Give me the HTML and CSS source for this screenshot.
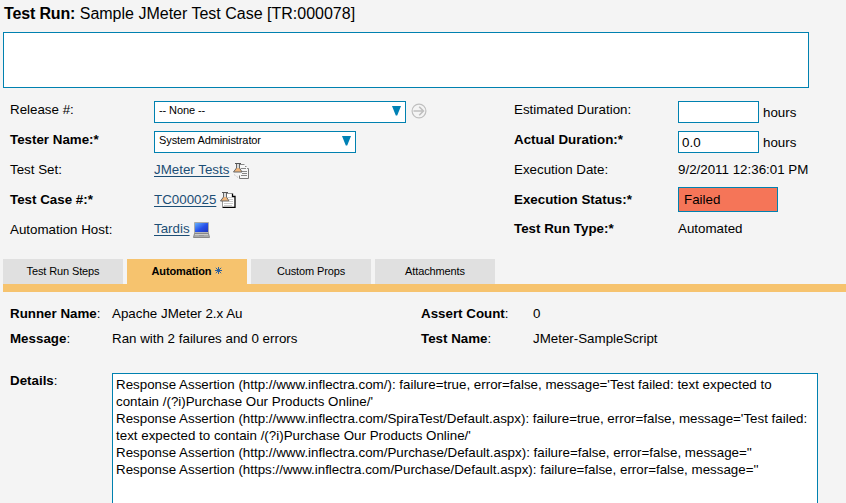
FILE: index.html
```html
<!DOCTYPE html>
<html lang="en">
<head>
<meta charset="utf-8">
<title>Test Run</title>
<link rel="stylesheet" href="styles.css">
</head>
<body>
<h1 class="title"><b>Test Run:</b> <span class="name">Sample JMeter Test Case [TR:000078]</span></h1>
<div class="description"></div>
<section class="fields">
  <div class="label">Release #:</div>
  <div class="value"><div class="select wide"><span>-- None --</span><svg class="arrow" width="9" height="10" viewBox="0 0 9 10"><path d="M0 0h9L5.2 9.5H3.8z" fill="#0081b5"/></svg></div><svg class="go" width="16" height="16" viewBox="0 0 16 16" fill="none" stroke="#bfbfbf"><circle cx="8" cy="8" r="6.9" stroke-width="1.2"/><path d="M2.5 8H12M8.2 3.8L12.4 8l-4.2 4.2" stroke-width="1.6"/></svg></div>
  <div class="label">Estimated Duration:</div>
  <div class="value"><div class="input"></div><span class="unit">hours</span></div>

  <div class="label req">Tester Name:*</div>
  <div class="value"><div class="select"><span>System Administrator</span><svg class="arrow" width="9" height="10" viewBox="0 0 9 10"><path d="M0 0h9L5.2 9.5H3.8z" fill="#0081b5"/></svg></div></div>
  <div class="label req">Actual Duration:*</div>
  <div class="value"><div class="input">0.0</div><span class="unit">hours</span></div>

  <div class="label">Test Set:</div>
  <div class="value"><a class="text">JMeter Tests</a><svg class="icon" width="16" height="16" viewBox="0 0 16 16"><path d="M6.5.5h5v3h2v2h2v10h-9v-2h-1V8" fill="#f7f7f7"/><path d="M7 1.5h4.5M12 3.5h1.5M14 5.5h1.5" stroke="#888"/><path d="M15.5 5.5v10H6.5v-3" fill="none" stroke="#777"/><path d="M8 5.5h5M9 8.5h5M9 10.5h5M8 12.5h6" stroke="#888"/><path d="M3.5 1h3v4l2.5 4H.5l3-4z" fill="#efb57b" stroke="#666"/><path d="M2 .5h6" stroke="#555"/><path d="M4 1h2v4H4z" fill="#ddd"/><path d="M1 11.5l4 3" stroke="#bbb" stroke-dasharray="1 1"/></svg></div>
  <div class="label">Execution Date:</div>
  <div class="value"><span class="text date">9/2/2011 12:36:01 PM</span></div>

  <div class="label req">Test Case #:*</div>
  <div class="value"><a class="text">TC000025</a><svg class="icon case" width="16" height="16" viewBox="0 0 16 16"><path d="M2.5 9V15.5h13v-11l-3-3H6" fill="#fff"/><path d="M6 1.5h6" stroke="#999"/><path d="M12.5 1.5v3h2.5v10.8H2.5" fill="none" stroke="#000" stroke-width="1.3"/><path d="M2.5 9v6" stroke="#999"/><path d="M8 5.5h4M9 7.5h4M9 9.5h4M4 11.5h9M4 13.5h8" stroke="#ccc"/><path d="M3.5 1h3v4l2.5 4H.5l3-4z" fill="#efb57b" stroke="#666"/><path d="M2 .5h6" stroke="#555"/><path d="M4 1h2v4H4z" fill="#ddd"/></svg></div>
  <div class="label req">Execution Status:*</div>
  <div class="value"><div class="status">Failed</div></div>

  <div class="label">Automation Host:</div>
  <div class="value last"><a class="text">Tardis</a><svg class="icon host" width="17" height="16" viewBox="0 0 17 16"><defs><linearGradient id="s" x2="1" y2="1"><stop stop-color="#65aff9"/><stop offset=".55" stop-color="#254ee9"/><stop offset="1" stop-color="#2238b8"/></linearGradient></defs><path d="M1.5.5h14v11h-14z" fill="#b6b6b6" stroke="#aaa"/><path d="M2 1h13v9H2z" fill="url(#s)"/><path d="M1.5 11.5h14l1 4H.5z" fill="#aaa" stroke="#888"/><path d="M2 12.5h13" stroke="#ccc"/><path d="M6 13.5h5" stroke="#999"/></svg></div>
  <div class="label req last">Test Run Type:*</div>
  <div class="value last"><span class="text">Automated</span></div>
</section>
<nav class="tabs">
  <div class="tab">Test Run Steps</div>
  <div class="tab active"><span>Automation</span><svg class="star" width="7" height="7" viewBox="0 0 7 7"><path d="M3.5 0v7M0 3.5h7M.8.8l5.4 5.4M6.2.8L.8 6.2" stroke="#2c609c"/></svg></div>
  <div class="tab">Custom Props</div>
  <div class="tab">Attachments</div>
</nav>
<section class="panel">
  <div><b>Runner Name</b>:</div><div>Apache JMeter 2.x Au</div><div><b>Assert Count</b>:</div><div>0</div>
  <div><b>Message</b>:</div><div>Ran with 2 failures and 0 errors</div><div><b>Test Name</b>:</div><div>JMeter-SampleScript</div>
</section>
<section class="details">
  <div class="caption"><b>Details</b>:</div>
  <div class="log">
    <p>Response Assertion (http://www.inflectra.com/): failure=true, error=false, message='Test failed: text expected to</p>
    <p>contain /(?i)Purchase Our Products Online/'</p>
    <p>Response Assertion (http://www.inflectra.com/SpiraTest/Default.aspx): failure=true, error=false, message='Test failed:</p>
    <p>text expected to contain /(?i)Purchase Our Products Online/'</p>
    <p>Response Assertion (http://www.inflectra.com/Purchase/Default.aspx): failure=false, error=false, message=''</p>
    <p>Response Assertion (https://www.inflectra.com/Purchase/Default.aspx): failure=false, error=false, message=''</p>
  </div>
</section>
</body>
</html>
```
FILE: styles.css
```css
* { box-sizing: border-box; }
body { margin: 0; height: 503px; overflow: hidden; background: #f4f4f4; color: #000; font: 13.35px/17px "Liberation Sans", Arial, sans-serif; white-space: nowrap; }
.title { margin: 0; height: 32px; padding: 4px 0 0 4px; font-size: 16px; line-height: 20px; font-weight: normal; }
.title b { letter-spacing: -.15px; }
.description { margin-left: 3px; width: 806px; height: 56px; border: 1px solid #0081b0; background: #fff; }
.fields { height: 171px; padding: 13px 0 0 10px; display: grid; grid-template-columns: 144px 360px 164px 168px; grid-template-rows: repeat(5, 30px); }
.req { font-weight: bold; }
.value { display: flex; align-items: flex-start; }
.label.last, .value.last .text { margin-top: -1px; }
.select { display: flex; justify-content: space-between; width: 202px; height: 22px; border: 1px solid #0081b0; background: #fff; padding: 1px 4px 0 4px; font-size: 11px; line-height: 15px; letter-spacing: -.1px; }
.wide { width: 252px; }
.arrow { margin-top: 3px; }
.go { margin: 2px 0 0 5px; }
.input { width: 81px; height: 22px; border: 1px solid #0081b0; background: #fff; padding: 2px 3px; }
.unit { margin: 3px 0 0 4px; }
a.text { color: #1c4e75; text-decoration: underline; text-underline-offset: 2px; text-decoration-thickness: 1px; }
.icon { margin: 2px 0 0 3.5px; }
.case { margin: 1px 0 0 4px; }
.host { margin-top: 1px; }
.status { width: 100px; height: 25px; margin-top: -4px; border: 1px solid #0081b0; background: #f57558; padding: 3px 5px; }
.tabs { display: flex; gap: 4px; margin-left: 3px; height: 33px; border-bottom: 8px solid #f6c36e; }
.tab { width: 120px; height: 25px; background: #e0e0e0; font-size: 11px; line-height: 25px; letter-spacing: -.12px; display: flex; justify-content: center; align-items: center; gap: 4px; }
.active { background: #f6c36e; font-weight: bold; }
.star { margin-bottom: 2px; }
.panel { display: grid; grid-template-columns: 102px 309px 112px 1fr; grid-template-rows: 25px 25px; padding: 13px 0 0 10px; height: 81px; }
.details { display: flex; height: 130px; padding-left: 10px; }
.caption { width: 102px; margin-top: -1px; }
.log { width: 706px; height: 130px; padding: 2px 3px; border: 1px solid #0081b0; border-bottom: 0; background: #fff; }
p { margin: 0; }
```
